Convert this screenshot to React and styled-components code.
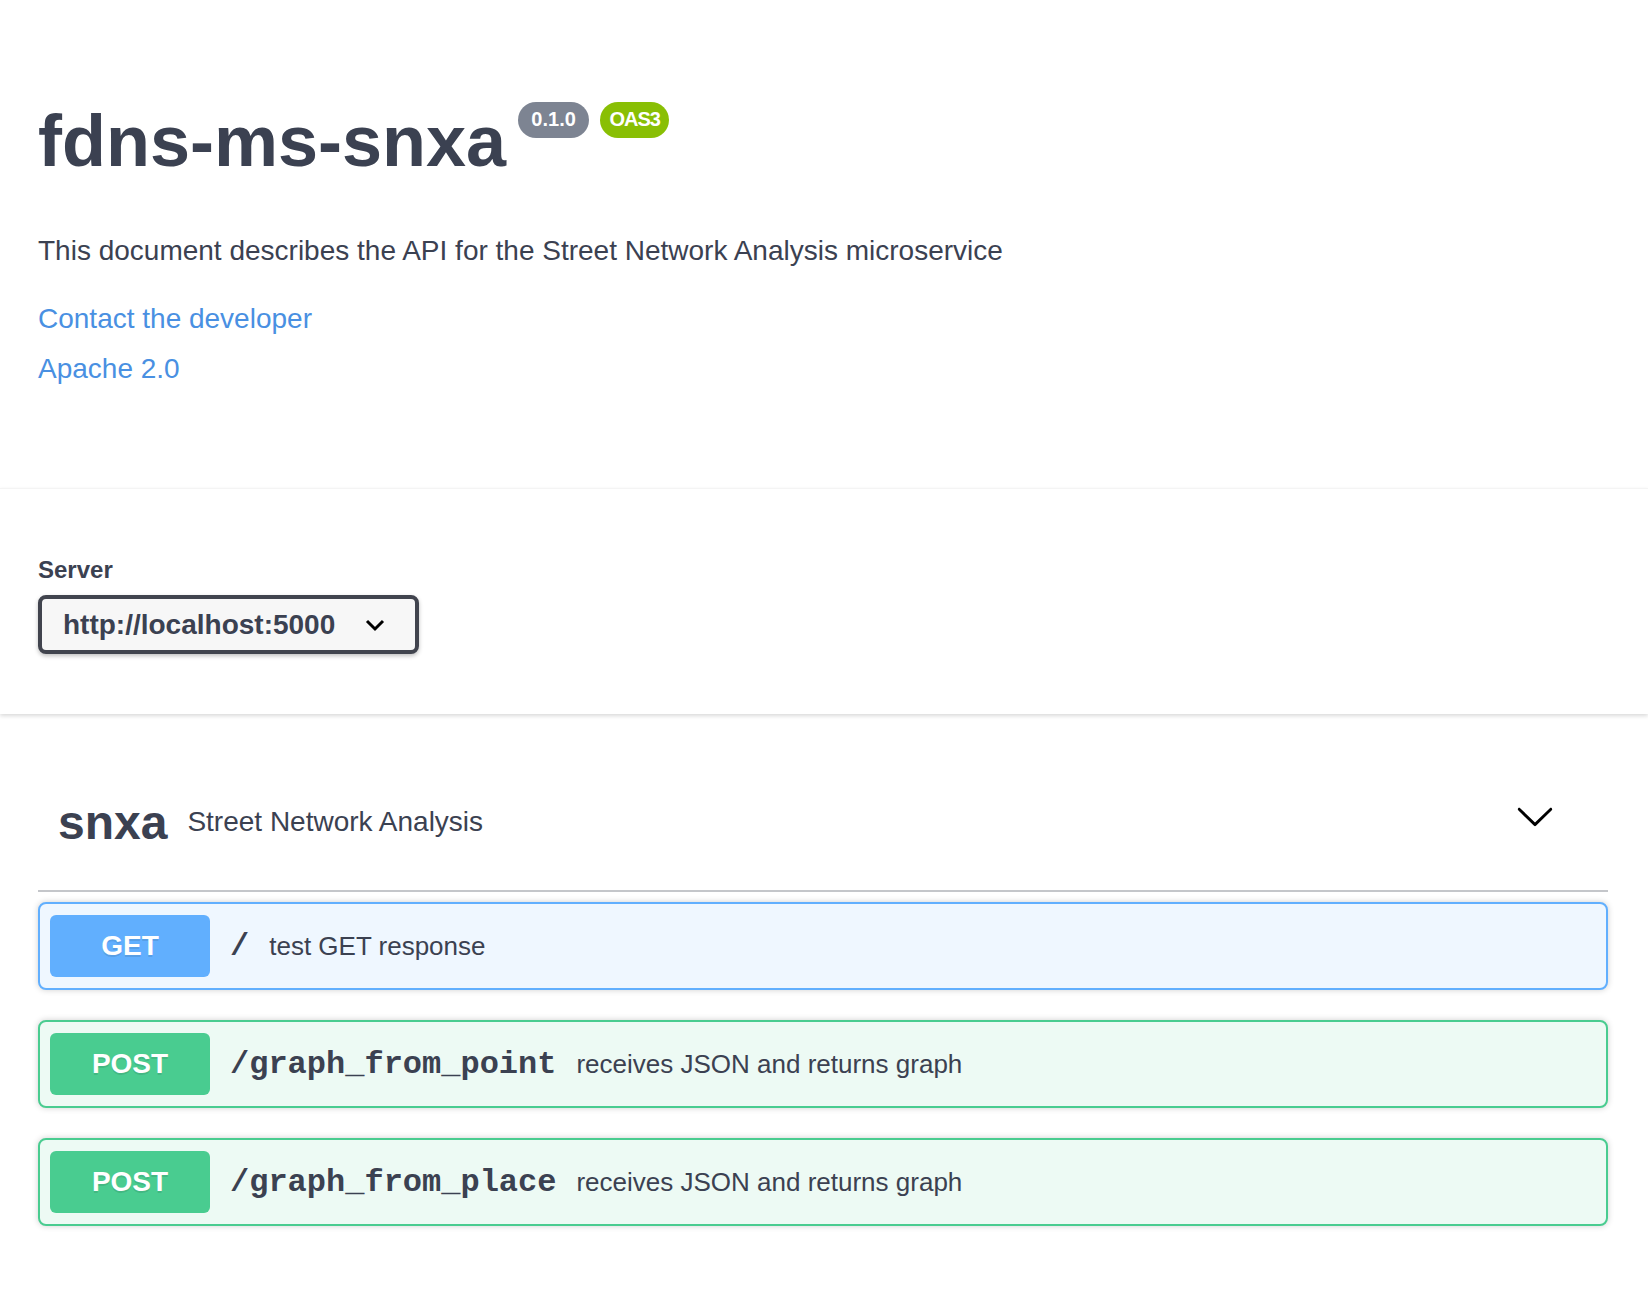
import React from 'react'
import styled, { createGlobalStyle } from 'styled-components'

const GlobalStyle = createGlobalStyle`
  body {
    margin: 0;
    background: #fff;
    font-family: 'Liberation Sans', Arial, sans-serif;
    color: #3b4151;
  }
`

const Wrapper = styled.div`
  box-sizing: border-box;
  width: 100%;
  padding: 0 40px 0 38px;
`

const Info = styled.div`
  padding: 100px 0 103px;
`

const Title = styled.h2`
  display: flex;
  align-items: flex-start;
  margin: 0;
  font-size: 72px;
  line-height: 83px;
  font-weight: 700;
  color: #3b4151;
`

const Badge = styled.small`
  box-sizing: border-box;
  width: ${p => p.$width}px;
  margin: 2px 0 0 ${p => (p.$first ? 12 : 11)}px;
  padding: 6px 0 7px;
  border-radius: 40px;
  background: ${p => p.$color};
  color: #fff;
  text-align: center;
  font-size: 20px;
  line-height: 23px;
  font-weight: 700;
  letter-spacing: ${p => p.$tight ? '-1px' : '0'};
`

const Description = styled.p`
  margin: 52px 0 0;
  font-size: 28px;
  line-height: 32px;
`

const InfoLink = styled.a`
  display: block;
  margin-top: ${p => p.$gap}px;
  font-size: 28px;
  line-height: 32px;
  color: #4990e2;
  text-decoration: none;
`

const SchemeContainer = styled.section`
  background: #fff;
  box-shadow: 0 2px 4px 0 rgba(0, 0, 0, 0.15);
  border-top: 1px solid #f4f4f4;
  padding: 67px 0 60px;
  margin-bottom: 40px;
`

const ServerLabel = styled.div`
  font-size: 24px;
  line-height: 28px;
  font-weight: 700;
  color: #3b4151;
`

const Select = styled.div`
  box-sizing: border-box;
  display: flex;
  align-items: center;
  justify-content: space-between;
  width: 381px;
  height: 59px;
  margin-top: 11px;
  padding: 0 30px 0 21px;
  border: 4px solid #41444e;
  border-radius: 8px;
  background: #f7f7f7;
  box-shadow: 0 2px 4px 0 rgba(0, 0, 0, 0.25);
  font-size: 28px;
  font-weight: 700;
  color: #3b4151;
`

const TagHeader = styled.h4`
  box-sizing: border-box;
  display: flex;
  align-items: center;
  height: 138px;
  margin: 0 0 10px;
  padding: 0 53px 0 20px;
  border-bottom: 2px solid rgba(59, 65, 81, 0.3);
  font-size: 48px;
  font-weight: 700;
  color: #3b4151;
`

const TagSmall = styled.small`
  flex: 1;
  padding: 0 20px;
  font-size: 28px;
  font-weight: 400;
`

const Chevron = styled.svg`
  margin-top: -13px;
`

const Opblock = styled.div`
  display: flex;
  align-items: center;
  margin-bottom: 30px;
  padding: 11px 10px;
  border: 2px solid ${p => p.$border};
  border-radius: 8px;
  background: ${p => p.$bg};
  box-shadow: 0 0 6px rgba(0, 0, 0, 0.19);
`

const Method = styled.span`
  display: flex;
  align-items: center;
  justify-content: center;
  width: 160px;
  height: 62px;
  border-radius: 6px;
  background: ${p => p.$color};
  color: #fff;
  font-size: 28px;
  font-weight: 700;
  text-shadow: 0 2px 0 rgba(0, 0, 0, 0.1);
`

const Path = styled.span`
  padding: 0 20px;
  font-family: 'Liberation Mono', 'Courier New', monospace;
  font-size: 32px;
  font-weight: 700;
  color: #3b4151;
`

const Summary = styled.span`
  flex: 1;
  font-size: 26px;
  color: #3b4151;
`

const ops = [
  { method: 'GET', path: '/', text: 'test GET response', color: '#61affe', bg: '#eff7ff' },
  { method: 'POST', path: '/graph_from_point', text: 'receives JSON and returns graph', color: '#49cc90', bg: '#edfaf4' },
  { method: 'POST', path: '/graph_from_place', text: 'receives JSON and returns graph', color: '#49cc90', bg: '#edfaf4' },
]

export default function App() {
  return (
    <>
      <GlobalStyle />
      <Wrapper>
        <Info>
          <Title>
            fdns-ms-snxa
            <Badge $first $width={71} $color="#7d8492">0.1.0</Badge>
            <Badge $width={69} $tight $color="#89bf04">OAS3</Badge>
          </Title>
          <Description>This document describes the API for the Street Network Analysis microservice</Description>
          <InfoLink href="#" $gap={36}>Contact the developer</InfoLink>
          <InfoLink href="#" $gap={18}>Apache 2.0</InfoLink>
        </Info>
      </Wrapper>

      <SchemeContainer>
        <Wrapper>
          <ServerLabel>Server</ServerLabel>
          <Select>
            http://localhost:5000
            <svg width="20" height="14" viewBox="0 0 20 14">
              <polyline points="2,3 10,11 18,3" fill="none" stroke="#000" strokeWidth="3" />
            </svg>
          </Select>
        </Wrapper>
      </SchemeContainer>

      <Wrapper>
        <TagHeader>
          snxa
          <TagSmall>Street Network Analysis</TagSmall>
          <Chevron width="40" height="40" viewBox="0 0 20 20">
            <path d="M17.418 6.109c.272-.268.709-.268.979 0s.271.701 0 .969l-7.908 7.83c-.27.268-.707.268-.979 0l-7.908-7.83c-.27-.268-.27-.701 0-.969.271-.268.709-.268.979 0L10 13.25l7.418-7.141z" fill="#000" />
          </Chevron>
        </TagHeader>
        {ops.map(op => (
          <Opblock key={op.path} $border={op.color} $bg={op.bg}>
            <Method $color={op.color}>{op.method}</Method>
            <Path>{op.path}</Path>
            <Summary>{op.text}</Summary>
          </Opblock>
        ))}
      </Wrapper>
    </>
  )
}
